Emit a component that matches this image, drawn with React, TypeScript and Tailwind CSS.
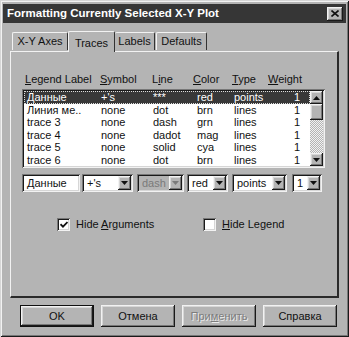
import { ReactNode } from "react";

const raised =
  "shadow-[inset_-1px_-1px_#1a1a1a,inset_1px_1px_#f2f2f2,inset_-2px_-2px_#777777,inset_2px_2px_#d6d6d6]";
const sunken =
  "shadow-[inset_1px_1px_#777777,inset_-1px_-1px_#f2f2f2,inset_2px_2px_#1a1a1a,inset_-2px_-2px_#d6d6d6]";

const rows = [
  { label: "Данные", symbol: "+'s", line: "***", color: "red", type: "points", weight: "1" },
  { label: "Линия ме..", symbol: "none", line: "dot", color: "brn", type: "lines", weight: "1" },
  { label: "trace 3", symbol: "none", line: "dash", color: "grn", type: "lines", weight: "1" },
  { label: "trace 4", symbol: "none", line: "dadot", color: "mag", type: "lines", weight: "1" },
  { label: "trace 5", symbol: "none", line: "solid", color: "cya", type: "lines", weight: "1" },
  { label: "trace 6", symbol: "none", line: "dot", color: "brn", type: "lines", weight: "1" },
];

function Arrow(props: { up?: boolean; gray?: boolean }) {
  return (
    <svg width="7" height="4" viewBox="0 0 7 4" className={props.up ? "rotate-180" : ""}>
      <path d="M0 0h7L3.5 4z" fill={props.gray ? "#7a7a7a" : "#111"} />
    </svg>
  );
}

function Combo(props: { value: string; width: string; disabled?: boolean }) {
  return (
    <div className={`${props.width} h-[18px] flex p-[2px] ${sunken} ${props.disabled ? "bg-[#b4b4b4] text-[#7a7a7a]" : "bg-white"}`}>
      <span className="flex-1 pl-[3px] leading-[14px]">{props.value}</span>
      <div className={`w-[13px] h-[14px] bg-[#b4b4b4] flex items-center justify-center ${raised}`}>
        <Arrow gray={props.disabled} />
      </div>
    </div>
  );
}

function Button(props: { children: ReactNode; isDefault?: boolean; disabled?: boolean }) {
  return (
    <div className={`w-[74px] h-[22px] flex items-center justify-center bg-[#b4b4b4] ${props.isDefault ? "border border-[#111]" : ""} ${props.disabled ? "text-[#7d7d7d] [text-shadow:1px_1px_#ececec]" : "text-[#111]"}`}>
      <div className={`w-full h-full flex items-center justify-center ${raised}`}>{props.children}</div>
    </div>
  );
}

export default function App() {
  return (
    <div className="w-[349px] h-[337px] bg-[#b4b4b4] flex flex-col text-[11px] text-[#111] font-['Liberation_Sans',Arial,sans-serif] shadow-[inset_1px_1px_#d6d6d6,inset_-1px_-1px_#1a1a1a,inset_2px_2px_#f2f2f2,inset_-2px_-2px_#777777] px-[3px] pt-[4px]">
      <div className="h-[19px] bg-[#363636] flex items-center justify-between pl-[4px] pr-[3px]">
        <span className="text-white font-bold text-[11.5px]">Formatting Currently Selected X-Y Plot</span>
        <div className={`w-[16px] h-[14px] bg-[#b4b4b4] flex items-center justify-center ${raised}`}>
          <svg width="8" height="7" viewBox="0 0 8 7">
            <path d="M0.5 0.5L7.5 6.5M7.5 0.5L0.5 6.5" stroke="#111" strokeWidth="1.6" />
          </svg>
        </div>
      </div>

      <div className="flex items-end ml-[8px] mt-[7px] h-[21px]">
        <div className="h-[18px] w-[56px] flex items-center justify-center border-t border-l border-[#f2f2f2] border-r border-r-[#333] rounded-t-[2px] mb-[1px] ml-[1px]">X-Y Axes</div>
        <div className="h-[21px] w-[47px] flex items-start pt-[3px] justify-center border-t border-l border-[#f2f2f2] border-r border-r-[#333] rounded-t-[2px] bg-[#b4b4b4] -mb-[1px] relative z-10">Traces</div>
        <div className="h-[18px] w-[40px] flex items-center justify-center border-t border-[#f2f2f2] border-r border-r-[#333] rounded-t-[2px] mb-[1px]">Labels</div>
        <div className="h-[18px] w-[51px] flex items-center justify-center border-t border-l border-[#f2f2f2] border-r border-r-[#333] rounded-t-[2px] mb-[1px] ml-[1px]">Defaults</div>
      </div>

      <div className="mx-[7px] h-[247px] border-t border-l border-[#f2f2f2] border-r-2 border-b-2 border-r-[#2a2a2a] border-b-[#2a2a2a] px-[11px] pt-[20px]">
        <div className="flex h-[14px] leading-[14px] pl-[3px]">
          <span className="w-[75px]"><u>L</u>egend Label</span>
          <span className="w-[52px]"><u>S</u>ymbol</span>
          <span className="w-[41px]">L<u>i</u>ne</span>
          <span className="w-[39px]"><u>C</u>olor</span>
          <span className="w-[36px]"><u>T</u>ype</span>
          <span><u>W</u>eight</span>
        </div>

        <div className={`mt-[3px] w-[303px] h-[79px] bg-white flex p-[2px] ${sunken}`}>
          <div className="flex-1 flex flex-col">
            {rows.map((r, i) => (
              <div
                key={r.label}
                className={`h-[12.5px] flex items-center leading-[12px] pl-[3px] ${i === 0 ? "bg-[#383838] text-white outline-1 outline-dotted outline-[#ddd] -outline-offset-1" : ""}`}
              >
                <span className="w-[74px] whitespace-nowrap">{r.label}</span>
                <span className="w-[52px]">{r.symbol}</span>
                <span className="w-[44px]">{r.line}</span>
                <span className="w-[37px]">{r.color}</span>
                <span className="w-[56px]">{r.type}</span>
                <span className="w-[10px] text-right">{r.weight}</span>
              </div>
            ))}
          </div>
          <div className="w-[13px] flex flex-col bg-[repeating-conic-gradient(#f2f2f2_0_25%,#b4b4b4_0_50%)] bg-[length:2px_2px]">
            <div className={`h-[13px] bg-[#b4b4b4] flex items-center justify-center ${raised}`}><Arrow up /></div>
            <div className={`h-[16px] bg-[#b4b4b4] ${raised}`} />
            <div className="flex-1" />
            <div className={`h-[13px] bg-[#b4b4b4] flex items-center justify-center ${raised}`}><Arrow /></div>
          </div>
        </div>

        <div className="mt-[6px] flex items-center">
          <div className={`w-[58px] h-[18px] bg-white p-[2px] pl-[5px] leading-[14px] ${sunken}`}>Данные</div>
          <div className="ml-[2px]"><Combo value="+'s" width="w-[51px]" /></div>
          <div className="ml-[4px]"><Combo value="dash" width="w-[47px]" disabled /></div>
          <div className="ml-[3px]"><Combo value="red" width="w-[41px]" /></div>
          <div className="ml-[4px]"><Combo value="points" width="w-[55px]" /></div>
          <div className="ml-[5px]"><Combo value="1" width="w-[30px]" /></div>
        </div>

        <div className="mt-[25px] flex items-center h-[14px]">
          <div className="ml-[35px] w-[146px] flex items-center gap-[6px]">
            <div className={`w-[13px] h-[13px] bg-white flex items-center justify-center ${sunken}`}>
              <svg width="8" height="7" viewBox="0 0 8 7">
                <path d="M0.5 3.2L3 5.7L7.5 1" stroke="#111" strokeWidth="1.8" fill="none" />
              </svg>
            </div>
            <span>Hide <u>A</u>rguments</span>
          </div>
          <div className="flex items-center gap-[6px]">
            <div className={`w-[13px] h-[13px] bg-white ${sunken}`} />
            <span><u>H</u>ide Legend</span>
          </div>
        </div>
      </div>

      <div className="mt-[7px] ml-[17px] flex gap-[7px]">
        <Button isDefault>OK</Button>
        <Button>Отмена</Button>
        <Button disabled>При<u>м</u>енить</Button>
        <Button>Справка</Button>
      </div>
    </div>
  );
}
